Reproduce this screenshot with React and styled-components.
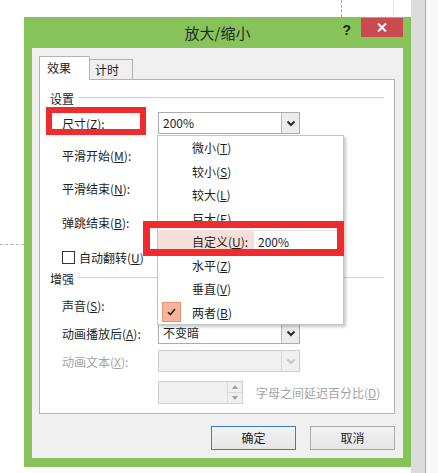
import React from "react";
import styled, { createGlobalStyle } from "styled-components";

const GlobalStyle = createGlobalStyle`
  html, body { margin: 0; padding: 0; background: #fff; }
  body {
    font-family: "Noto Sans CJK SC", "Noto Sans", sans-serif;
    font-size: 12px;
    color: #1e1e1e;
  }
  u { text-underline-offset: 1px; }
`;

const Page = styled.div`
  display: flex;
  width: 438px;
  height: 473px;
  overflow: hidden;
  background: #fff;
`;

const LeftGutter = styled.div`
  width: 24px;
  flex-shrink: 0;
`;

const GuideLine = styled.div`
  margin-top: 244px;
  border-top: 1px dashed #b5b5b5;
`;

const Middle = styled.div`
  width: 387px;
  flex-shrink: 0;
  display: flex;
  flex-direction: column;
`;

const TopStrip = styled.div`
  height: 17px;
  display: flex;
`;

const VGuide = styled.div`
  margin-left: ${(p) => p.$ml}px;
  border-left: 1px ${(p) => (p.$dashed ? "dashed #a8a8a8" : "solid #e4e4e4")};
`;

const Dialog = styled.div`
  height: 450px;
  background: #86c45a;
  padding: 0 8px 9px;
  display: flex;
  flex-direction: column;
  box-sizing: border-box;
`;

const TitleBar = styled.div`
  height: 31px;
  display: grid;
  grid-template-columns: 1fr auto 1fr;
  align-items: center;
`;

const Title = styled.div`
  font-size: 15px;
  color: #2a2a2a;
  line-height: 31px;
`;

const TitleControls = styled.div`
  display: flex;
  justify-content: flex-end;
  align-self: start;
`;

const Help = styled.div`
  font-family: "Liberation Sans", sans-serif;
  font-weight: bold;
  font-size: 14px;
  color: #1f1f1f;
  margin-top: 3px;
  margin-right: 10px;
  line-height: 20px;
`;

const CloseButton = styled.div`
  width: 42px;
  height: 19px;
  margin-top: 1px;
  background: #cb4a50;
  display: flex;
  align-items: center;
  justify-content: center;
`;

const Client = styled.div`
  flex: 1;
  background: #f0f0f0;
  padding: 8px 8px 0 7px;
  display: flex;
  flex-direction: column;
`;

const Tabs = styled.div`
  display: flex;
  align-items: flex-end;
  height: 24px;
  margin-bottom: -1px;
  position: relative;
  z-index: 1;
`;

const Tab = styled.div`
  width: ${(p) => p.$w}px;
  height: ${(p) => (p.$active ? 24 : 21)}px;
  box-sizing: border-box;
  border: 1px solid #b3b3b3;
  border-bottom: ${(p) => (p.$active ? "none" : "1px solid #b3b3b3")};
  background: ${(p) => (p.$active ? "#fff" : "#f0f0f0")};
  margin-left: ${(p) => (p.$active ? 0 : -1)}px;
  padding-left: ${(p) => (p.$active ? 7 : 5)}px;
  line-height: ${(p) => (p.$active ? 22 : 19)}px;
`;

const Panel = styled.div`
  position: relative;
  width: 356px;
  height: 335px;
  box-sizing: border-box;
  border: 1px solid #b3b3b3;
  background: #fff;
  padding-top: 10px;
`;

const GroupHeader = styled.div`
  display: flex;
  align-items: center;
  height: 16px;
  margin-top: ${(p) => p.$mt || 0}px;
  padding: 0 10px;
  color: #1e1e1e;
`;

const GroupLine = styled.div`
  flex: 1;
  margin-left: 4px;
  border-top: 1px solid #d6d6d6;
  border-bottom: 1px solid #fafafa;
`;

const Row = styled.div`
  display: flex;
  align-items: center;
  height: ${(p) => p.$h || 22}px;
  margin-top: ${(p) => p.$mt}px;
  padding-left: ${(p) => p.$pl ?? 22}px;
`;

const Label = styled.div`
  width: 96px;
  color: ${(p) => (p.$disabled ? "#a3a3a3" : "#1e1e1e")};
  white-space: nowrap;
`;

const Combo = styled.div`
  width: 142px;
  height: 22px;
  box-sizing: border-box;
  border: 1px solid ${(p) => (p.$disabled ? "#cfcfcf" : "#acacac")};
  background: ${(p) => (p.$disabled ? "#f0f0f0" : "#fff")};
  display: flex;
  align-items: stretch;
`;

const ComboText = styled.div`
  flex: 1;
  padding-left: 4px;
  line-height: 20px;
`;

const ComboButton = styled.div`
  width: 17px;
  border-left: 1px solid ${(p) => (p.$disabled ? "#dadada" : "#b9b9b9")};
  background: ${(p) => (p.$disabled ? "#f0f0f0" : "#ececec")};
  display: flex;
  align-items: center;
  justify-content: center;
`;

const CheckBox = styled.div`
  width: 13px;
  height: 13px;
  box-sizing: border-box;
  border: 1px solid #333;
  background: #fff;
  margin-right: 4px;
`;

const Spinner = styled.div`
  width: 85px;
  height: 23px;
  box-sizing: border-box;
  border: 1px solid #cfcfcf;
  background: #f0f0f0;
  display: flex;
`;

const SpinField = styled.div`
  flex: 1;
`;

const SpinButtons = styled.div`
  width: 14px;
  border-left: 1px solid #dadada;
  display: flex;
  flex-direction: column;
`;

const SpinHalf = styled.div`
  flex: 1;
  display: flex;
  align-items: center;
  justify-content: center;
  & + & { border-top: 1px solid #dadada; }
`;

const HintLabel = styled.div`
  margin-left: 13px;
  color: #a3a3a3;
`;

const DropList = styled.div`
  position: absolute;
  left: 117px;
  top: 55px;
  width: 187px;
  height: 190px;
  box-sizing: border-box;
  border: 1px solid #c4c4c4;
  background: #fff;
  box-shadow: 2px 2px 3px rgba(0, 0, 0, 0.22);
  z-index: 2;
`;

const Item = styled.div`
  display: flex;
  align-items: center;
  height: 23.5px;
  padding-left: 4px;
  background: ${(p) => (p.$hot ? "#f7e0d9" : "transparent")};
`;

const IconSlot = styled.div`
  width: 19px;
  height: 20px;
  margin-right: 11px;
  box-sizing: border-box;
  border: 1px solid ${(p) => (p.$on ? "#e59477" : "transparent")};
  background: ${(p) => (p.$on ? "#f8b49b" : "transparent")};
  display: flex;
  align-items: center;
  justify-content: center;
`;

const ItemText = styled.div`
  width: ${(p) => (p.$w ? `${p.$w}px` : "auto")};
`;

const InlineInput = styled.div`
  flex: 1;
  align-self: stretch;
  margin: 1px 6px 1px 0;
  background: #fff;
  padding-left: 4px;
  line-height: 21px;
`;

const Mark = styled.div`
  position: absolute;
  left: ${(p) => p.$x}px;
  top: ${(p) => p.$y}px;
  width: ${(p) => p.$w}px;
  height: ${(p) => p.$h}px;
  box-sizing: border-box;
  border: ${(p) => p.$b}px solid #ef2b2d;
  z-index: 3;
`;

const ButtonRow = styled.div`
  display: flex;
  justify-content: flex-end;
  gap: 14px;
  margin-top: 12px;
  width: 356px;
`;

const Button = styled.div`
  width: 85px;
  height: 24px;
  box-sizing: border-box;
  border: 1px solid ${(p) => (p.$primary ? "#3d7cc0" : "#acacac")};
  background: linear-gradient(#f2f2f2, #e6e6e6);
  text-align: center;
  line-height: 22px;
`;

const RightStrip = styled.div`
  flex: 1;
  display: flex;
`;

const ScrollTrack = styled.div`
  width: 14px;
  background: #dcdcdc;
  border-right: 1px solid #a9a9a9;
`;

const ScrollRest = styled.div`
  flex: 1;
  background: #f8f8f8;
`;

const Chevron = ({ color = "#2b2b2b" }) => (
  <svg width="10" height="7" viewBox="0 0 10 7">
    <path d="M1.5 1.5 L5 5 L8.5 1.5" fill="none" stroke={color} strokeWidth="2" />
  </svg>
);

const Tri = ({ up }) => (
  <svg width="6" height="4" viewBox="0 0 6 4">
    <path d={up ? "M0 4 L3 0 L6 4 Z" : "M0 0 L3 4 L6 0 Z"} fill="#a0a0a0" />
  </svg>
);

const items = [
  { text: "微小", key: "T" },
  { text: "较小", key: "S" },
  { text: "较大", key: "L" },
  { text: "巨大", key: "E" },
  { text: "自定义", key: "U", custom: true },
  { text: "水平", key: "Z" },
  { text: "垂直", key: "V" },
  { text: "两者", key: "B", checked: true },
];

const fields = [
  { text: "平滑开始", key: "M", mt: 10 },
  { text: "平滑结束", key: "N", mt: 11 },
  { text: "弹跳结束", key: "B", mt: 12 },
];

export default function App() {
  return (
    <>
      <GlobalStyle />
      <Page>
        <LeftGutter>
          <GuideLine />
        </LeftGutter>
        <Middle>
          <TopStrip>
            <VGuide $ml={317} $dashed />
            <VGuide $ml={51} />
          </TopStrip>
          <Dialog>
            <TitleBar>
              <div />
              <Title>放大/缩小</Title>
              <TitleControls>
                <Help>?</Help>
                <CloseButton>
                  <svg width="10" height="9" viewBox="0 0 10 9">
                    <path d="M1 0.5 L9 8.5 M9 0.5 L1 8.5" stroke="#fff" strokeWidth="2" />
                  </svg>
                </CloseButton>
              </TitleControls>
            </TitleBar>
            <Client>
              <Tabs>
                <Tab $active $w={51}>效果</Tab>
                <Tab $w={44}>计时</Tab>
              </Tabs>
              <Panel>
                <GroupHeader>
                  设置
                  <GroupLine />
                </GroupHeader>
                <Row $mt={6}>
                  <Label>尺寸(<u>Z</u>):</Label>
                  <Combo>
                    <ComboText>200%</ComboText>
                    <ComboButton>
                      <Chevron />
                    </ComboButton>
                  </Combo>
                </Row>
                {fields.map((f) => (
                  <Row $mt={f.mt} key={f.key}>
                    <Label>
                      {f.text}(<u>{f.key}</u>):
                    </Label>
                    <Combo>
                      <ComboText />
                      <ComboButton>
                        <Chevron />
                      </ComboButton>
                    </Combo>
                  </Row>
                ))}
                <Row $mt={13}>
                  <CheckBox />
                  自动翻转(<u>U</u>)
                </Row>
                <GroupHeader $mt={2}>
                  增强
                  <GroupLine />
                </GroupHeader>
                <Row $mt={8}>
                  <Label>声音(<u>S</u>):</Label>
                </Row>
                <Row $mt={6}>
                  <Label>动画播放后(<u>A</u>):</Label>
                  <Combo>
                    <ComboText>不变暗</ComboText>
                    <ComboButton>
                      <Chevron />
                    </ComboButton>
                  </Combo>
                </Row>
                <Row $mt={6}>
                  <Label $disabled>
                    动画文本(<u>X</u>):
                  </Label>
                  <Combo $disabled>
                    <ComboText />
                    <ComboButton $disabled>
                      <Chevron color="#c4c4c4" />
                    </ComboButton>
                  </Combo>
                </Row>
                <Row $mt={9} $h={23} $pl={118}>
                  <Spinner>
                    <SpinField />
                    <SpinButtons>
                      <SpinHalf>
                        <Tri up />
                      </SpinHalf>
                      <SpinHalf>
                        <Tri />
                      </SpinHalf>
                    </SpinButtons>
                  </Spinner>
                  <HintLabel>
                    字母之间延迟百分比(<u>D</u>)
                  </HintLabel>
                </Row>

                <DropList>
                  {items.map((it) =>
                    it.custom ? (
                      <Item $hot key={it.key}>
                        <IconSlot />
                        <ItemText $w={62}>
                          {it.text}(<u>{it.key}</u>):
                        </ItemText>
                        <InlineInput>200%</InlineInput>
                      </Item>
                    ) : (
                      <Item key={it.key}>
                        <IconSlot $on={it.checked}>
                          {it.checked && (
                            <svg width="9" height="8" viewBox="0 0 9 8">
                              <path d="M1 4.2 L3.4 6.6 L8 1" fill="none" stroke="#222" strokeWidth="1.6" />
                            </svg>
                          )}
                        </IconSlot>
                        <ItemText>
                          {it.text}(<u>{it.key}</u>)
                        </ItemText>
                      </Item>
                    )
                  )}
                </DropList>

                <Mark $x={6} $y={27} $w={100} $h={28} $b={6} />
                <Mark $x={103} $y={141} $w={201} $h={35} $b={7} />
              </Panel>
              <ButtonRow>
                <Button $primary>确定</Button>
                <Button>取消</Button>
              </ButtonRow>
            </Client>
          </Dialog>
        </Middle>
        <RightStrip>
          <ScrollTrack />
          <ScrollRest />
        </RightStrip>
      </Page>
    </>
  );
}
